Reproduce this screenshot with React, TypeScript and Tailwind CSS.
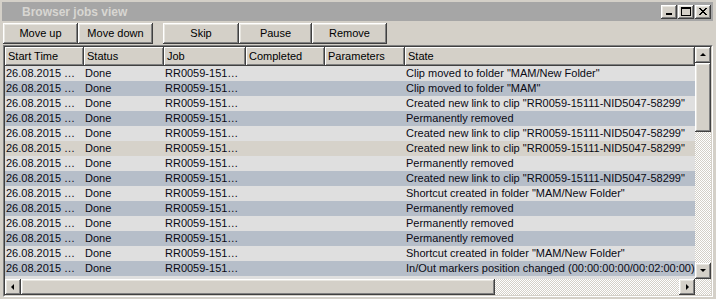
const raised =
  'shadow-[inset_-1px_-1px_0_#404040,inset_1px_1px_0_#ffffff,inset_-2px_-2px_0_#808080,inset_2px_2px_0_#e8e6e0]'
const headerCell =
  'shadow-[inset_-1px_-1px_0_#404040,inset_1px_1px_0_#ffffff,inset_-2px_-2px_0_#808080]'
const dither = 'bg-[repeating-conic-gradient(#d4d0c8_0_25%,#ffffff_0_50%)] bg-[length:2px_2px]'

const LINK = 'Created new link to clip "RR0059-15111-NID5047-58299"'
const REMOVED = 'Permanently removed'

const rows: { state: string; tone: 'light' | 'blue' | 'sel' }[] = [
  { state: 'Clip moved to folder "MAM/New Folder"', tone: 'light' },
  { state: 'Clip moved to folder "MAM"', tone: 'blue' },
  { state: LINK, tone: 'light' },
  { state: REMOVED, tone: 'blue' },
  { state: LINK, tone: 'light' },
  { state: LINK, tone: 'sel' },
  { state: REMOVED, tone: 'light' },
  { state: LINK, tone: 'blue' },
  { state: 'Shortcut created in folder "MAM/New Folder"', tone: 'light' },
  { state: REMOVED, tone: 'blue' },
  { state: REMOVED, tone: 'light' },
  { state: REMOVED, tone: 'blue' },
  { state: 'Shortcut created in folder "MAM/New Folder"', tone: 'light' },
  { state: 'In/Out markers position changed (00:00:00:00/00:02:00:00)', tone: 'blue' },
]

const toneBg = {
  light: 'bg-[#dfdfdf]',
  blue: 'bg-[#b6bec9]',
  sel: 'bg-[#d6d2ca]',
}

const columns = [
  { label: 'Start Time', w: 'w-[79px]' },
  { label: 'Status', w: 'w-[80px]' },
  { label: 'Job', w: 'w-[82px]' },
  { label: 'Completed', w: 'w-[79px]' },
  { label: 'Parameters', w: 'w-[80px]' },
  { label: 'State', w: 'w-[290px]' },
]

function Arrow({ dir }: { dir: 'up' | 'down' | 'left' | 'right' }) {
  const pts = {
    up: '1,5 4,2 7,5',
    down: '1,2 4,5 7,2',
    left: '5,1 2,4 5,7',
    right: '3,1 6,4 3,7',
  }[dir]
  return (
    <svg width="8" height="8" viewBox="0 0 8 8">
      <polygon points={pts} fill="#000" />
    </svg>
  )
}

function ScrollBtn({ dir }: { dir: 'up' | 'down' | 'left' | 'right' }) {
  return (
    <div className={`w-[16px] h-[16px] shrink-0 bg-[#d4d0c8] flex items-center justify-center ${raised}`}>
      <Arrow dir={dir} />
    </div>
  )
}

function WinBtn({ kind }: { kind: 'min' | 'max' | 'close' }) {
  return (
    <div className={`w-[16px] h-[14px] bg-[#d4d0c8] flex items-center justify-center ${raised}`}>
      <svg width="10" height="9" viewBox="0 0 10 9">
        {kind === 'min' && <rect x="2" y="6" width="6" height="2" fill="#000" />}
        {kind === 'max' && (
          <>
            <rect x="0.5" y="0.5" width="9" height="8" fill="none" stroke="#000" />
            <rect x="0" y="0" width="10" height="2" fill="#000" />
          </>
        )}
        {kind === 'close' && (
          <path d="M1 1L8 8M2 1L9 8M8 1L1 8M9 1L2 8" stroke="#000" strokeWidth="1" />
        )}
      </svg>
    </div>
  )
}

function ToolBtn({ label, w }: { label: string; w: string }) {
  return (
    <div className={`${w} h-[21px] bg-[#d4d0c8] flex items-center justify-center text-black ${raised}`}>
      {label}
    </div>
  )
}

export default function App() {
  return (
    <div className="w-[716px] h-[299px] bg-[#d4d0c8] p-[2px] pr-[3px] flex flex-col text-[11px] font-['Liberation_Sans',Arial,sans-serif] overflow-hidden">
      {/* Title bar */}
      <div className="h-[19px] shrink-0 bg-[#a6a6a6] flex items-center pl-[20px] pr-[2px]">
        <span className="font-bold text-[12px] text-[#d8d6d2] flex-1">Browser jobs view</span>
        <div className="flex gap-[0px]">
          <WinBtn kind="min" />
          <div className="w-[1px]" />
          <WinBtn kind="max" />
          <div className="w-[1px]" />
          <WinBtn kind="close" />
        </div>
      </div>

      {/* Toolbar */}
      <div className="h-[23px] shrink-0 flex items-center pl-[1px] pt-[1px]">
        <ToolBtn label="Move up" w="w-[75px]" />
        <ToolBtn label="Move down" w="w-[75px]" />
        <div className="w-[10px]" />
        <ToolBtn label="Skip" w="w-[76px]" />
        <ToolBtn label="Pause" w="w-[73px]" />
        <ToolBtn label="Remove" w="w-[75px]" />
      </div>

      {/* List */}
      <div className="flex-1 min-h-0 mt-[1px] ml-[1px] border border-t-[#808080] border-l-[#808080] border-b-white border-r-white">
        <div className="h-full border border-t-[#404040] border-l-[#404040] border-b-[#d4d0c8] border-r-[#d4d0c8] flex flex-col">
          <div className="flex-1 min-h-0 flex">
            <div className="flex-1 min-w-0 flex flex-col overflow-hidden bg-[#dfdfdf]">
              <div className="h-[19px] shrink-0 flex bg-[#d4d0c8]">
                {columns.map((c) => (
                  <div key={c.label} className={`${c.w} shrink-0 h-full pl-[3px] flex items-center text-black ${headerCell}`}>
                    {c.label}
                  </div>
                ))}
                <div className={`flex-1 ${headerCell}`} />
              </div>
              {rows.map((r, i) => (
                <div key={i} className={`h-[15px] shrink-0 flex items-center text-[#0a0a14] whitespace-nowrap ${toneBg[r.tone]}`}>
                  <div className="w-[79px] shrink-0 pl-[1px]">26.08.2015 …</div>
                  <div className="w-[80px] shrink-0 pl-[1px]">Done</div>
                  <div className="w-[82px] shrink-0 pl-[1px]">RR0059-151…</div>
                  <div className="w-[79px] shrink-0" />
                  <div className="w-[80px] shrink-0" />
                  <div className="flex-1 min-w-0 pl-[1px] overflow-hidden">{r.state}</div>
                </div>
              ))}
            </div>
            {/* Vertical scrollbar */}
            <div className="w-[16px] shrink-0 flex flex-col">
              <ScrollBtn dir="up" />
              <div className={`h-[69px] shrink-0 bg-[#d4d0c8] ${raised}`} />
              <div className={`flex-1 ${dither}`} />
              <ScrollBtn dir="down" />
            </div>
          </div>
          {/* Horizontal scrollbar */}
          <div className="h-[16px] shrink-0 flex">
            <ScrollBtn dir="left" />
            <div className={`w-[474px] shrink-0 bg-[#d4d0c8] ${raised}`} />
            <div className={`flex-1 ${dither}`} />
            <ScrollBtn dir="right" />
            <div className={`w-[16px] shrink-0 ${dither}`} />
          </div>
        </div>
      </div>
    </div>
  )
}
